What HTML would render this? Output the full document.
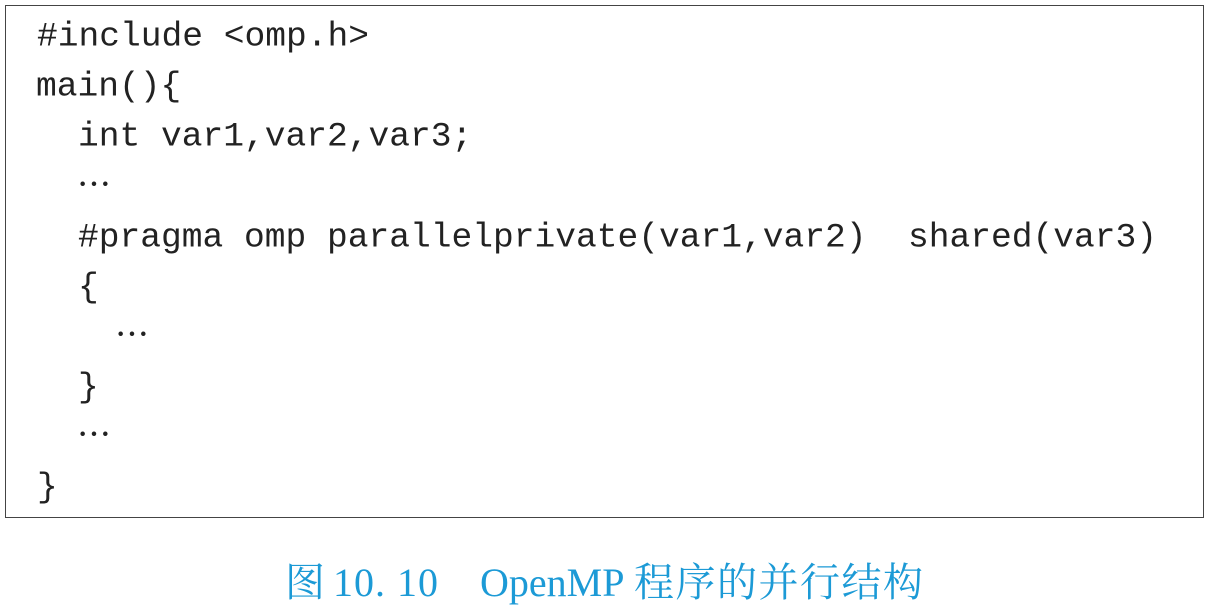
<!DOCTYPE html>
<html><head><meta charset="utf-8"><style>
body{margin:0;width:1209px;height:613px;background:#fff;position:relative;overflow:hidden}
.box{position:absolute;left:5px;top:5px;width:1199px;height:513px;border:1.5px solid #444;box-sizing:border-box}
.l{position:absolute;font-family:"Liberation Mono",monospace;font-size:34.6px;color:#222;white-space:pre;line-height:1;transform:translateY(-50%)}
.d{position:absolute;font-family:"Noto Sans CJK SC",sans-serif;font-size:34px;color:#222;line-height:1;transform:translateY(-50%)}
.c{position:absolute;top:583px;transform:translateY(-50%);font-family:"Liberation Serif","Noto Serif CJK SC",serif;font-size:40px;color:#1c9ad6;white-space:pre;line-height:1}
</style></head><body>
<div class="box"></div>
<div class="l" style="left:37px;top:38px">#include &lt;omp.h&gt;</div>
<div class="l" style="left:36px;top:88px">main(){</div>
<div class="l" style="left:78px;top:138px">int var1,var2,var3;</div>
<div class="d" style="left:77px;top:183px">…</div>
<div class="l" style="left:78px;top:239px">#pragma omp parallelprivate(var1,var2)  shared(var3)</div>
<div class="l" style="left:78px;top:289px">{</div>
<div class="d" style="left:115px;top:333px">…</div>
<div class="l" style="left:78px;top:389px">}</div>
<div class="d" style="left:77px;top:433px">…</div>
<div class="l" style="left:37px;top:489px">}</div>
<div class="c" style="left:285px">图</div>
<div class="c" style="left:333px;letter-spacing:1px">10. 10</div>
<div class="c" style="left:480px">OpenMP</div>
<div class="c" style="left:634px;letter-spacing:1.5px">程序的并行结构</div>
</body></html>
